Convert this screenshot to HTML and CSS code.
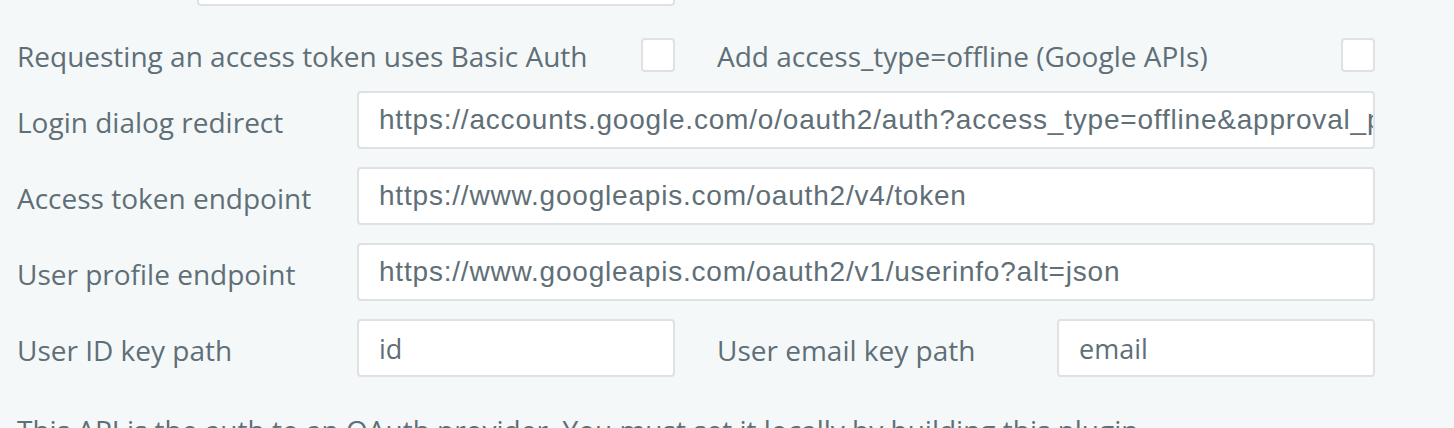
FILE: index.html
```html
<!DOCTYPE html>
<html>
<head>
<meta charset="utf-8">
<link rel="stylesheet" href="styles.css">
</head>
<body>
<div class="form">
  <div class="row row-top">
    <div class="label"></div>
    <input class="field field-top" type="text" value="">
  </div>
  <div class="row row-check">
    <div class="label label-check">Requesting an access token uses Basic Auth</div>
    <div class="control control-check"><span class="checkbox"></span></div>
    <div class="label label-check label-right">Add access_type=offline (Google APIs)</div>
    <div class="control control-check"><span class="checkbox"></span></div>
  </div>
  <div class="row">
    <div class="label">Login dialog redirect</div>
    <input class="field field-url wide" type="text" value="https://accounts.google.com/o/oauth2/auth?access_type=offline&amp;approval_prompt=force">
  </div>
  <div class="row">
    <div class="label">Access token endpoint</div>
    <input class="field field-url wide" type="text" value="https://www.googleapis.com/oauth2/v4/token">
  </div>
  <div class="row">
    <div class="label">User profile endpoint</div>
    <input class="field field-url wide" type="text" value="https://www.googleapis.com/oauth2/v1/userinfo?alt=json">
  </div>
  <div class="row">
    <div class="label">User ID key path</div>
    <input class="field field-short" type="text" value="id">
    <div class="label label-right">User email key path</div>
    <input class="field field-short" type="text" value="email">
  </div>
  <p class="note">This API is the auth to an OAuth provider. You must set it locally by building this plugin.</p>
</div>
</body>
</html>
```
FILE: styles.css
```css
html, body {
  margin: 0;
  padding: 0;
  background: #f5f8f9;
  overflow: hidden;
}
body {
  font-family: "Open Sans", "Liberation Sans", sans-serif;
  color: #5f6f77;
  font-size: 28px;
}
.form {
  padding-left: 17px;
  display: flex;
  flex-direction: column;
}
.row {
  display: grid;
  grid-template-columns: 340px 318px 382px 318px;
  grid-template-rows: 58px;
  align-items: center;
  height: 58px;
  margin-bottom: 18px;
}
.row-top {
  margin-top: -52px;
  margin-bottom: 32px;
  grid-template-columns: 180px 478px;
}
.row-check {
  height: 34px;
  grid-template-rows: 34px;
  margin-bottom: 19px;
}
.label {
  font-size: 28px;
  line-height: 36px;
  padding-top: 4px;
  white-space: nowrap;
}
.label-check {
  line-height: 32px;
  padding-top: 2px;
}
.label-right {
  padding-left: 42px;
}
.control-check {
  display: flex;
  justify-content: flex-end;
}
.checkbox {
  display: block;
  width: 34px;
  height: 34px;
  box-sizing: border-box;
  background: #fff;
  border: 2px solid #dfe2e4;
  border-radius: 4px;
}
.field {
  box-sizing: border-box;
  height: 58px;
  margin: 0;
  background: #fff;
  border: 2px solid #dfe2e4;
  border-radius: 4px;
  padding: 0 0 0 20px;
  color: #5f6f77;
  outline: none;
}
.field-top {
  width: 478px;
}
.wide {
  grid-column: 2 / 5;
  width: 1018px;
}
.field-url {
  font-family: "Liberation Sans", Arial, sans-serif;
  font-size: 28px;
  letter-spacing: 0.8px;
}
.field-short {
  width: 318px;
  font-family: "Open Sans", sans-serif;
  font-size: 27px;
}
.note {
  margin: 15px 0 0;
  font-size: 28px;
  line-height: 40px;
  white-space: nowrap;
}
```
